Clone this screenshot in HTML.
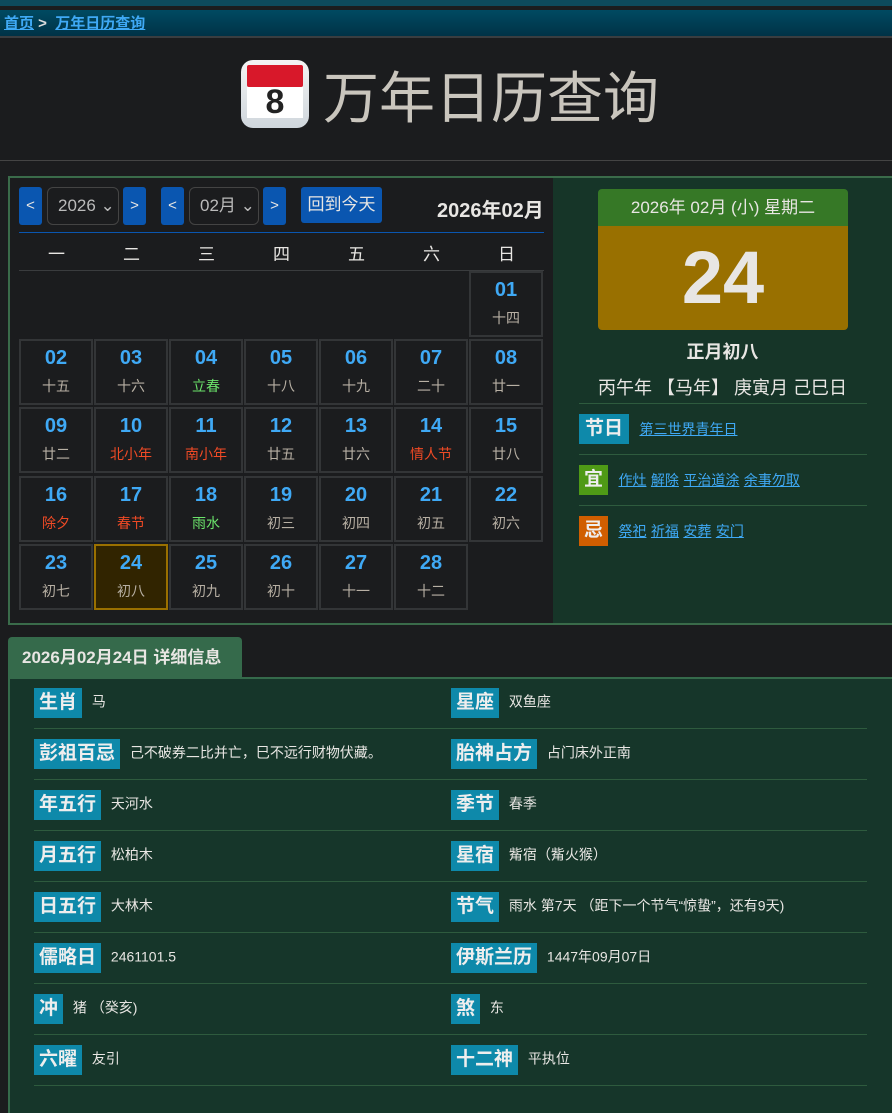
<!DOCTYPE html>
<html><head><meta charset="utf-8"><style>
*{box-sizing:border-box;margin:0;padding:0}
body{width:892px;height:1113px;overflow:hidden;background:#1b1c1e;font-family:"Liberation Sans","Noto Sans CJK SC",sans-serif;color:#e8e6e3;position:relative}
.abs{position:absolute}
a{color:#3fa9f5;text-decoration:underline}
.topbar{left:0;top:0;width:892px;height:6px;background:#0d4a5c}
.crumb{left:0;top:10px;width:892px;height:28px;background:linear-gradient(#004a62,#003246);border-bottom:2px solid #3a3d40;font-size:15px;font-weight:bold;padding:2px 4px;color:#ddd}
.hline{left:0;top:160px;width:892px;height:1px;background:#444}
.title{left:0;top:60px;width:892px;text-align:center;font-size:56px;color:#c9c5bd;line-height:76px;padding-left:8px}
.icon{display:inline-block;width:68px;height:68px;border-radius:12px;background:linear-gradient(#f4f4f4,#cfd6dc);vertical-align:-10px;margin-right:14px;position:relative}
.box{left:8px;top:176px;width:884px;height:449px;border:2px solid #3a6b4a;background:#1b1c1e}
.right{left:553px;top:178px;width:339px;height:445px;background:#163528}
.btn{position:absolute;top:187px;height:38px;background:#0a56b0;color:#e8e6e3;font-size:15px;text-align:center;line-height:38px;border-radius:3px}
.sel{position:absolute;top:187px;height:38px;border:1px solid #444;border-radius:6px;color:#bbb;font-size:17px;line-height:36px;padding-left:10px}
.cell{position:absolute;width:74px;height:66px;border:2px solid #333537;text-align:center;background:#1b1c1e}
.cell b{display:block;color:#3fa9f5;font-size:20px;margin-top:5px;line-height:24px}
.cell span{display:block;font-size:14px;color:#b8b0a4;margin-top:6px}
.wk{position:absolute;top:240px;width:75px;text-align:center;font-size:17px}
.lbl{display:inline-block;background:#0e89aa;color:#eee;font-weight:bold;font-size:19px;height:30px;line-height:30px;padding:0 5px;vertical-align:middle;margin-right:6px}
.row{position:absolute;font-size:14px;color:#e8e6e3}
.sep{position:absolute;height:1px;background:#2e5b3e}
</style></head><body>
<div class="abs topbar"></div>
<div class="abs crumb"><a href="#">首页</a> &gt; &nbsp;<a href="#">万年日历查询</a></div>
<div class="abs title"><span class="icon"><span class="abs" style="left:6px;top:5px;width:56px;height:22px;background:#d8182a;border-radius:2px"></span><span class="abs" style="left:6px;top:27px;width:56px;height:31px;background:#fff"></span><span class="abs" style="left:6px;top:22px;width:56px;font-size:34px;color:#222;line-height:40px;font-weight:bold">8</span></span>万年日历查询</div>
<div class="abs hline"></div>
<div class="abs box"></div>
<div class="abs right"></div>

<div class="btn" style="left:19px;width:23px">&lt;</div>
<div class="sel" style="left:47px;width:72px">2026 ⌄</div>
<div class="btn" style="left:123px;width:23px">&gt;</div>
<div class="btn" style="left:161px;width:23px">&lt;</div>
<div class="sel" style="left:189px;width:70px">02月 ⌄</div>
<div class="btn" style="left:263px;width:23px">&gt;</div>
<div class="btn" style="left:301px;width:81px;height:36px;line-height:36px;font-size:17px">回到今天</div>
<div class="abs" style="left:437px;top:194px;font-size:20px;font-weight:bold">2026年02月</div>
<div class="abs" style="left:19px;top:232px;width:525px;height:1px;background:#0a56b0"></div>
<div class="wk" style="left:19px">一</div><div class="wk" style="left:94px">二</div><div class="wk" style="left:169px">三</div><div class="wk" style="left:244px">四</div><div class="wk" style="left:319px">五</div><div class="wk" style="left:394px">六</div><div class="wk" style="left:469px">日</div>
<div class="abs" style="left:19px;top:270px;width:525px;height:1px;background:#3a3c3e"></div>

<div class="cell" style="left:469px;top:271px"><b>01</b><span>十四</span></div>

<div class="cell" style="left:19px;top:339px"><b>02</b><span>十五</span></div>
<div class="cell" style="left:94px;top:339px"><b>03</b><span>十六</span></div>
<div class="cell" style="left:169px;top:339px"><b>04</b><span style="color:#6be36b">立春</span></div>
<div class="cell" style="left:244px;top:339px"><b>05</b><span>十八</span></div>
<div class="cell" style="left:319px;top:339px"><b>06</b><span>十九</span></div>
<div class="cell" style="left:394px;top:339px"><b>07</b><span>二十</span></div>
<div class="cell" style="left:469px;top:339px"><b>08</b><span>廿一</span></div>

<div class="cell" style="left:19px;top:407px"><b>09</b><span>廿二</span></div>
<div class="cell" style="left:94px;top:407px"><b>10</b><span style="color:#f04a25">北小年</span></div>
<div class="cell" style="left:169px;top:407px"><b>11</b><span style="color:#f04a25">南小年</span></div>
<div class="cell" style="left:244px;top:407px"><b>12</b><span>廿五</span></div>
<div class="cell" style="left:319px;top:407px"><b>13</b><span>廿六</span></div>
<div class="cell" style="left:394px;top:407px"><b>14</b><span style="color:#f04a25">情人节</span></div>
<div class="cell" style="left:469px;top:407px"><b>15</b><span>廿八</span></div>

<div class="cell" style="left:19px;top:476px"><b>16</b><span style="color:#f04a25">除夕</span></div>
<div class="cell" style="left:94px;top:476px"><b>17</b><span style="color:#f04a25">春节</span></div>
<div class="cell" style="left:169px;top:476px"><b>18</b><span style="color:#6be36b">雨水</span></div>
<div class="cell" style="left:244px;top:476px"><b>19</b><span>初三</span></div>
<div class="cell" style="left:319px;top:476px"><b>20</b><span>初四</span></div>
<div class="cell" style="left:394px;top:476px"><b>21</b><span>初五</span></div>
<div class="cell" style="left:469px;top:476px"><b>22</b><span>初六</span></div>

<div class="cell" style="left:19px;top:544px"><b>23</b><span>初七</span></div>
<div class="cell" style="left:94px;top:544px;border-color:#9a7000;background:#312400"><b>24</b><span>初八</span></div>
<div class="cell" style="left:169px;top:544px"><b>25</b><span>初九</span></div>
<div class="cell" style="left:244px;top:544px"><b>26</b><span>初十</span></div>
<div class="cell" style="left:319px;top:544px"><b>27</b><span>十一</span></div>
<div class="cell" style="left:394px;top:544px"><b>28</b><span>十二</span></div>

<div class="abs" style="left:598px;top:189px;width:250px;height:141px;border-radius:4px;overflow:hidden">
<div style="height:37px;background:#367826;text-align:center;line-height:37px;font-size:17px">2026年 02月 (小) 星期二</div>
<div style="height:104px;background:#997000;text-align:center;font-size:74px;font-weight:bold;line-height:104px">24</div></div>
<div class="abs" style="left:553px;top:338px;width:339px;text-align:center;font-size:18px;font-weight:bold">正月初八</div>
<div class="abs" style="left:553px;top:374px;width:339px;text-align:center;font-size:18px">丙午年 【马年】 庚寅月 己巳日</div>
<div class="sep" style="left:579px;top:403px;width:288px"></div>
<div class="sep" style="left:579px;top:454px;width:288px"></div>
<div class="sep" style="left:579px;top:505px;width:288px"></div>
<div class="abs" style="left:579px;top:414px"><span class="lbl" style="padding:0 6px">节日</span> <a href="#" style="font-size:14px;vertical-align:middle">第三世界青年日</a></div>
<div class="abs" style="left:579px;top:465px"><span class="lbl" style="background:#4f9a16">宜</span> <a href="#" style="font-size:14px;vertical-align:middle">作灶</a> <a href="#" style="font-size:14px;vertical-align:middle">解除</a> <a href="#" style="font-size:14px;vertical-align:middle">平治道涂</a> <a href="#" style="font-size:14px;vertical-align:middle">余事勿取</a></div>
<div class="abs" style="left:579px;top:516px"><span class="lbl" style="background:#d05e00">忌</span> <a href="#" style="font-size:14px;vertical-align:middle">祭祀</a> <a href="#" style="font-size:14px;vertical-align:middle">祈福</a> <a href="#" style="font-size:14px;vertical-align:middle">安葬</a> <a href="#" style="font-size:14px;vertical-align:middle">安门</a></div>

<div class="abs" style="left:8px;top:637px;width:234px;height:42px;background:#356a4b;border-radius:4px 4px 0 0;font-size:17px;font-weight:bold;line-height:42px;padding-left:14px">2026月02月24日 详细信息</div>
<div class="abs" style="left:8px;top:677px;width:884px;height:436px;background:#16362a;border:2px solid #356a4b;border-bottom:none;border-right:none"></div>

<div class="row" style="left:34px;top:688px"><span class="lbl">生肖</span> 马</div>
<div class="row" style="left:451px;top:688px"><span class="lbl">星座</span> 双鱼座</div>
<div class="row" style="left:34px;top:739px"><span class="lbl">彭祖百忌</span> 己不破券二比并亡，巳不远行财物伏藏。</div>
<div class="row" style="left:451px;top:739px"><span class="lbl">胎神占方</span> 占门床外正南</div>
<div class="row" style="left:34px;top:790px"><span class="lbl">年五行</span> 天河水</div>
<div class="row" style="left:451px;top:790px"><span class="lbl">季节</span> 春季</div>
<div class="row" style="left:34px;top:841px"><span class="lbl">月五行</span> 松柏木</div>
<div class="row" style="left:451px;top:841px"><span class="lbl">星宿</span> 觜宿（觜火猴）</div>
<div class="row" style="left:34px;top:892px"><span class="lbl">日五行</span> 大林木</div>
<div class="row" style="left:451px;top:892px"><span class="lbl">节气</span> 雨水 第7天 （距下一个节气“惊蛰”，还有9天)</div>
<div class="row" style="left:34px;top:943px"><span class="lbl">儒略日</span> 2461101.5</div>
<div class="row" style="left:451px;top:943px"><span class="lbl">伊斯兰历</span> 1447年09月07日</div>
<div class="row" style="left:34px;top:994px"><span class="lbl">冲</span> 猪 （癸亥)</div>
<div class="row" style="left:451px;top:994px"><span class="lbl">煞</span> 东</div>
<div class="row" style="left:34px;top:1045px"><span class="lbl">六曜</span> 友引</div>
<div class="row" style="left:451px;top:1045px"><span class="lbl">十二神</span> 平执位</div>
<div class="sep" style="left:34px;top:728px;width:833px"></div>
<div class="sep" style="left:34px;top:779px;width:833px"></div>
<div class="sep" style="left:34px;top:830px;width:833px"></div>
<div class="sep" style="left:34px;top:881px;width:833px"></div>
<div class="sep" style="left:34px;top:932px;width:833px"></div>
<div class="sep" style="left:34px;top:983px;width:833px"></div>
<div class="sep" style="left:34px;top:1034px;width:833px"></div>
<div class="sep" style="left:34px;top:1085px;width:833px"></div>
</body></html>
